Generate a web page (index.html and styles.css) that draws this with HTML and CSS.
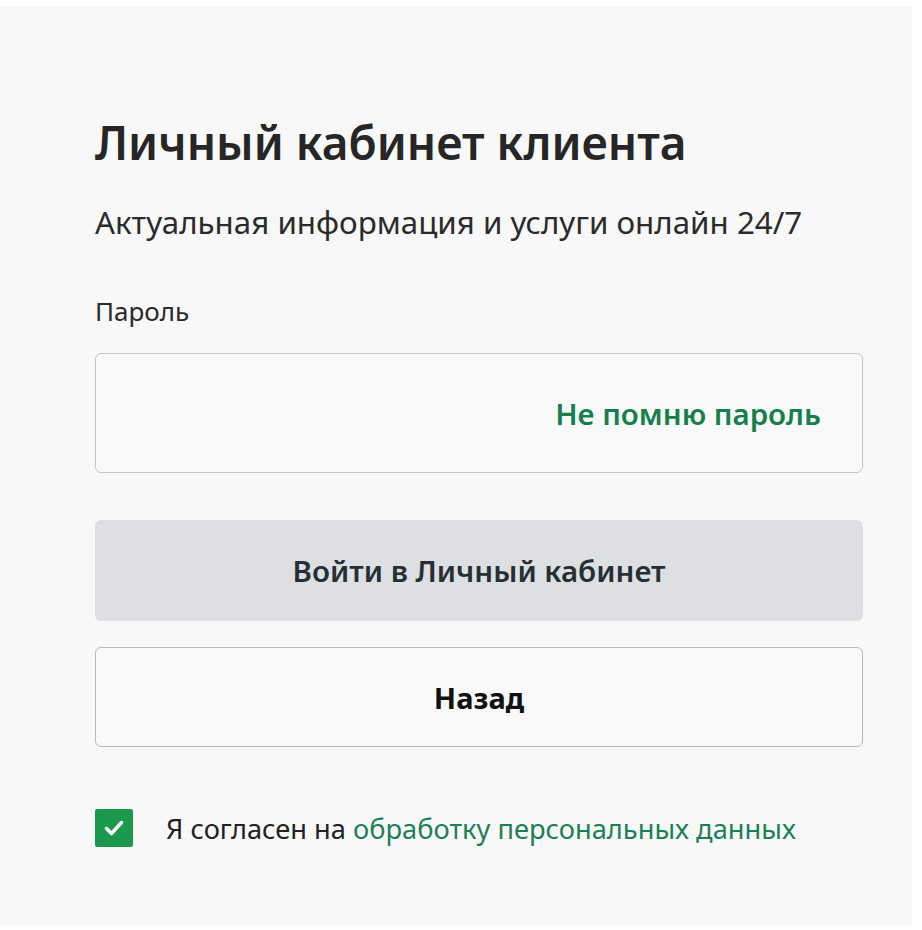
FILE: index.html
```html
<!DOCTYPE html>
<html lang="ru">
<head>
<meta charset="utf-8">
<title>Личный кабинет клиента</title>
<link rel="stylesheet" href="styles.css">
</head>
<body>
<main class="panel">
  <h1 class="title">Личный кабинет клиента</h1>
  <p class="subtitle">Актуальная информация и услуги онлайн 24/7</p>
  <label class="label">Пароль</label>
  <div class="field">
    <a class="forgot" href="#">Не помню пароль</a>
  </div>
  <button class="btn btn-primary" type="button">Войти в Личный кабинет</button>
  <button class="btn btn-back" type="button">Назад</button>
  <div class="agree">
    <span class="check">
      <svg width="20" height="16" viewBox="0 0 20 16"><path d="M2.5 8.5l5 5L17.5 2.5" fill="none" stroke="#fff" stroke-width="3.4" stroke-linecap="round" stroke-linejoin="round"/></svg>
    </span>
    <span class="agree-text">Я согласен на <a class="agree-link" href="#">обработку персональных данных</a></span>
  </div>
</main>
</body>
</html>
```
FILE: styles.css
```css
html, body {
  margin: 0;
  padding: 0;
  background: #ffffff;
}
body {
  font-family: "Noto Sans", "Open Sans", sans-serif;
  color: #222;
}
.panel {
  margin: 6px 10px 5px 0;
  background: #f8f8f8;
  height: 919px;
  box-sizing: border-box;
  padding: 106px 49px 0 95px;
  display: flex;
  flex-direction: column;
}
.title {
  margin: 0;
  font-size: 46px;
  font-weight: 600;
  line-height: 60px;
  color: #262626;
}
.subtitle {
  margin: 30px 0 0;
  font-size: 31.3px;
  line-height: 40px;
  color: #2b2b2b;
}
.label {
  margin-top: 53px;
  font-size: 26px;
  line-height: 32px;
  color: #2a2a2a;
}
.field {
  margin-top: 26px;
  height: 120px;
  box-sizing: border-box;
  border: 1px solid #c4c4c4;
  border-radius: 6px;
  background: #f9f9f9;
  display: flex;
  align-items: center;
  justify-content: flex-end;
  padding-right: 41px;
}
.forgot {
  font-size: 29.5px;
  font-weight: 600;
  color: #16804c;
  text-decoration: none;
}
.btn {
  display: flex;
  align-items: center;
  justify-content: center;
  width: 100%;
  box-sizing: border-box;
  border-radius: 6px;
  font-family: inherit;
  font-size: 29.5px;
  font-weight: 600;
  cursor: pointer;
}
.btn-primary {
  margin-top: 47px;
  height: 101px;
  border: none;
  background: #dddfe2;
  color: #263034;
}
.btn-back {
  margin-top: 26px;
  height: 100px;
  border: 1px solid #b9b9b9;
  background: #f9f9f9;
  color: #111;
  font-size: 29px;
  font-weight: 700;
}
.agree {
  margin-top: 62px;
  display: flex;
  align-items: center;
  gap: 33px;
}
.check {
  width: 38px;
  height: 38px;
  background: #1b9a4e;
  border-radius: 2px;
  display: flex;
  align-items: center;
  justify-content: center;
  flex: none;
}
.agree-text {
  font-size: 27.25px;
  color: #222;
}
.agree-link {
  color: #1d7f56;
  text-decoration: none;
}
```
